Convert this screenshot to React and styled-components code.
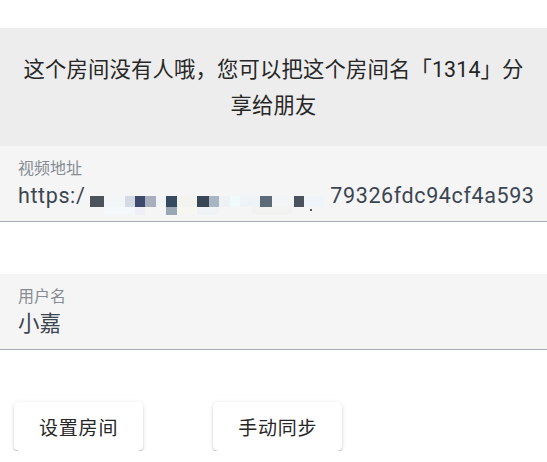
import React from 'react'
import styled, { createGlobalStyle } from 'styled-components'

const GlobalStyle = createGlobalStyle`
  html, body {
    margin: 0;
    padding: 0;
    background: #ffffff;
    font-family: Roboto, "Noto Sans CJK SC", sans-serif;
  }
`

const Page = styled.div`
  width: 547px;
  padding-top: 28px;
`

const Notice = styled.div`
  background: #ededed;
  color: #262626;
  font-size: 21.3px;
  letter-spacing: 0.2px;
  line-height: 36px;
  text-align: center;
  padding: 24px 20px 22px;
`

const Field = styled.div`
  box-sizing: border-box;
  height: 76px;
  background: #f5f5f5;
  border-bottom: 1px solid #a2a9b0;
  padding: 13px 18px 0;
  margin-bottom: ${p => p.$gap || 0}px;
  overflow: hidden;
`

const Label = styled.div`
  font-size: 16px;
  line-height: 20px;
  color: #868c93;
`

const Value = styled.div`
  margin-top: 2px;
  font-size: 21.5px;
  line-height: 30px;
  color: #3c4652;
  white-space: nowrap;
  letter-spacing: ${p => p.$spaced ? '0.6px' : '0'};
`

const Pixelated = styled.span`
  display: inline-flex;
  flex-direction: column;
  vertical-align: -4px;
  margin: 0 6px 0 5px;
`

const PixelRow = styled.span`
  display: flex;
  height: ${p => p.$h}px;
  align-items: flex-start;
`

const Pixel = styled.span`
  display: block;
  height: 100%;
  flex: none;
`

const Actions = styled.div`
  display: flex;
  gap: 70px;
  padding: 52px 0 0 14px;
`

const Button = styled.button`
  height: 49px;
  padding: 0 25px;
  border: none;
  border-radius: 5px;
  background: #ffffff;
  color: #262626;
  font-family: Roboto, "Noto Sans CJK SC", sans-serif;
  font-size: 19px;
  letter-spacing: 0.8px;
  box-shadow: 0 3px 1px -2px rgba(0,0,0,0.2), 0 2px 2px 0 rgba(0,0,0,0.14), 0 1px 5px 0 rgba(0,0,0,0.12);
  cursor: pointer;
`

const topRow = [
  [14, '#4d535b'], [21, '#f3f6f9'], [10, '#d3dae4'], [10, '#3e4a6c'], [11, '#a8aebe'],
  [10, '#f1f4f7'], [11, '#35495f'], [20, '#f2f3ef'], [12, '#384656'], [10, '#a9b5c3'],
  [11, '#eef2f5'], [10, '#effafb'], [20, '#eef3f8'], [12, '#5d6a78'], [22, '#f2f4f5'],
  [10, '#4a535d'], [20, '#eff3fa'],
]

const bottomRow = [
  [14, 'transparent'], [31, '#f5f8fb'], [10, '#eef0f6'], [21, 'transparent'], [11, '#9aa7b4'],
  [20, '#f7f6f0'], [22, '#f1f2f5'], [33, 'transparent'], [40, '#f2f3f1'], [18, 'transparent'],
  [2, '#555b62'],
]

function Redacted() {
  const last = bottomRow.length - 1
  return (
    <Pixelated>
      <PixelRow $h={11}>
        {topRow.map(([w, c], i) => <Pixel key={i} style={{ width: w, background: c }} />)}
      </PixelRow>
      <PixelRow $h={8}>
        {bottomRow.map(([w, c], i) => (
          <Pixel key={i} style={{ width: w, background: c, height: i === last ? 2 : undefined, marginTop: i === last ? 2 : 0 }} />
        ))}
      </PixelRow>
    </Pixelated>
  )
}

export default function App() {
  return (
    <Page>
      <GlobalStyle />
      <Notice>这个房间没有人哦，您可以把这个房间名「1314」分享给朋友</Notice>
      <Field $gap={52}>
        <Label>视频地址</Label>
        <Value $spaced>https:/<Redacted />79326fdc94cf4a593</Value>
      </Field>
      <Field>
        <Label>用户名</Label>
        <Value>小嘉</Value>
      </Field>
      <Actions>
        <Button>设置房间</Button>
        <Button>手动同步</Button>
      </Actions>
    </Page>
  )
}
